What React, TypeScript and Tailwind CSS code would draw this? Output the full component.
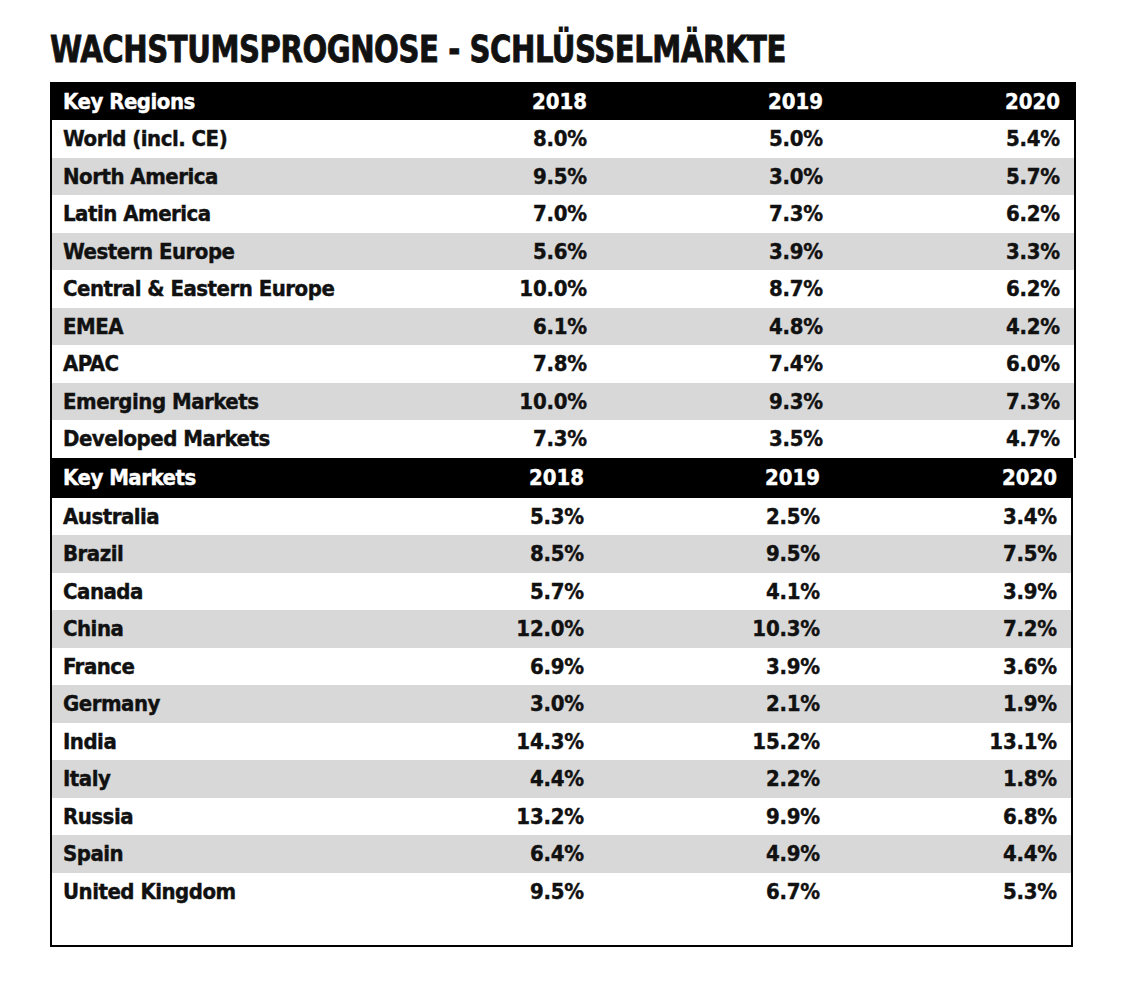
import React from "react";

const regions: [string, string, string, string][] = [
  ["World (incl. CE)", "8.0%", "5.0%", "5.4%"],
  ["North America", "9.5%", "3.0%", "5.7%"],
  ["Latin America", "7.0%", "7.3%", "6.2%"],
  ["Western Europe", "5.6%", "3.9%", "3.3%"],
  ["Central & Eastern Europe", "10.0%", "8.7%", "6.2%"],
  ["EMEA", "6.1%", "4.8%", "4.2%"],
  ["APAC", "7.8%", "7.4%", "6.0%"],
  ["Emerging Markets", "10.0%", "9.3%", "7.3%"],
  ["Developed Markets", "7.3%", "3.5%", "4.7%"],
];

const markets: [string, string, string, string][] = [
  ["Australia", "5.3%", "2.5%", "3.4%"],
  ["Brazil", "8.5%", "9.5%", "7.5%"],
  ["Canada", "5.7%", "4.1%", "3.9%"],
  ["China", "12.0%", "10.3%", "7.2%"],
  ["France", "6.9%", "3.9%", "3.6%"],
  ["Germany", "3.0%", "2.1%", "1.9%"],
  ["India", "14.3%", "15.2%", "13.1%"],
  ["Italy", "4.4%", "2.2%", "1.8%"],
  ["Russia", "13.2%", "9.9%", "6.8%"],
  ["Spain", "6.4%", "4.9%", "4.4%"],
  ["United Kingdom", "9.5%", "6.7%", "5.3%"],
];

function Row({ r, grey }: { r: [string, string, string, string]; grey: boolean }) {
  return (
    <div className={`flex items-center h-[37.5px] pr-[14px] ${grey ? "bg-[#d8d8d8]" : "bg-white"} text-[#111]`}>
      <div className="flex-1 pl-[11px] tracking-[-0.5px]">{r[0]}</div>
      <div className="w-[236px] text-right tracking-[-0.2px]">{r[1]}</div>
      <div className="w-[236px] text-right tracking-[-0.2px]">{r[2]}</div>
      <div className="w-[237px] text-right tracking-[-0.2px]">{r[3]}</div>
    </div>
  );
}

function Header({ label, h }: { label: string; h: string }) {
  return (
    <div className={`flex items-center ${h} bg-black text-white pr-[14px]`}>
      <div className="flex-1 pl-[11px] tracking-[-0.5px]">{label}</div>
      <div className="w-[236px] text-right">2018</div>
      <div className="w-[236px] text-right">2019</div>
      <div className="w-[237px] text-right">2020</div>
    </div>
  );
}

export default function App() {
  return (
    <div
      className="w-[1127px] h-[983px] bg-white pl-[50px] pt-[28px] font-bold [-webkit-text-stroke:0.4px]"
      style={{ fontFamily: '"DejaVu Sans Condensed", "Liberation Sans", sans-serif' }}
    >
      <div className="h-[54px]">
        <h1 className="inline-block origin-left scale-x-[0.875] text-[37px] leading-[44px] text-[#111] tracking-[-0.5px] whitespace-nowrap [-webkit-text-stroke:0.8px]">
          WACHSTUMSPROGNOSE - SCHLÜSSELMÄRKTE
        </h1>
      </div>
      <div className="text-[22px]">
        <div className="w-[1026px] border-x-2 border-black">
          <Header label="Key Regions" h="h-[38px]" />
          {regions.map((r, i) => (
            <Row key={r[0]} r={r} grey={i % 2 === 1} />
          ))}
        </div>
        <div className="w-[1023px] border-x-2 border-b-2 border-black">
          <Header label="Key Markets" h="h-[40px]" />
          {markets.map((r, i) => (
            <Row key={r[0]} r={r} grey={i % 2 === 1} />
          ))}
          <div className="h-[35px]" />
        </div>
      </div>
    </div>
  );
}
